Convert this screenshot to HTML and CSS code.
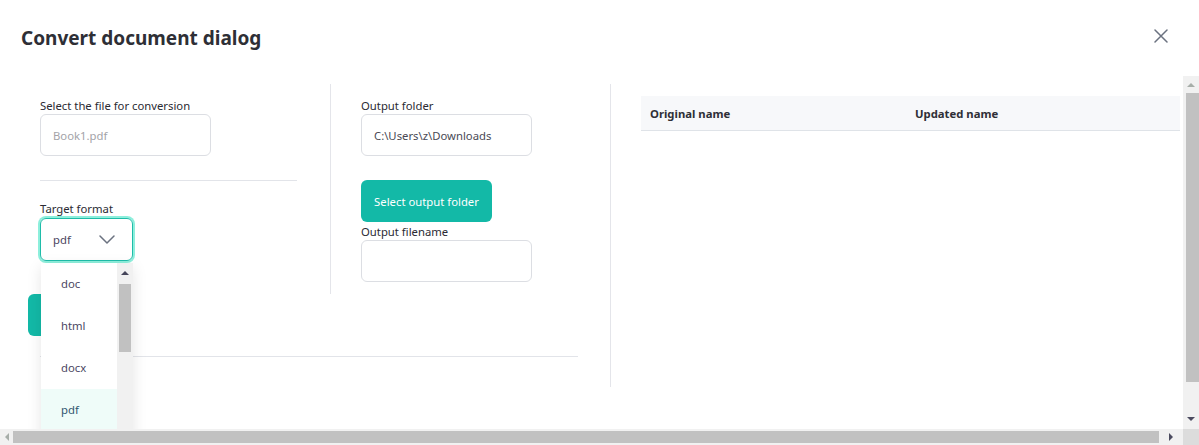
FILE: index.html
```html
<!DOCTYPE html>
<html lang="en">
<head>
<meta charset="utf-8">
<title>Convert document dialog</title>
<link rel="stylesheet" href="styles.css">
</head>
<body>
<div class="dialog">
  <header class="header">
    <h1 class="title">Convert document dialog</h1>
    <button class="close" aria-label="Close">
      <svg width="14" height="14" viewBox="0 0 14 14"><path d="M1 1 L13 13 M13 1 L1 13" stroke="#6b7280" stroke-width="1.5" fill="none" stroke-linecap="round"/></svg>
    </button>
  </header>
  <div class="frame">
    <div class="viewport">
      <div class="content">
        <section class="left">
          <div class="cols">
            <div class="col col1">
              <label class="label">Select the file for conversion</label>
              <div class="input disabled">Book1.pdf</div>
              <hr class="sep sep-mid">
              <label class="label">Target format</label>
              <div class="select-wrap">
                <div class="select focused">
                  <span>pdf</span>
                  <svg class="chev" width="16" height="9" viewBox="0 0 16 9"><path d="M1 1 L8 8 L15 1" stroke="#6b7280" stroke-width="1.5" fill="none" stroke-linecap="round" stroke-linejoin="round"/></svg>
                </div>
                <div class="dropdown">
                  <ul class="options">
                    <li class="opt">doc</li>
                    <li class="opt">html</li>
                    <li class="opt">docx</li>
                    <li class="opt selected">pdf</li>
                  </ul>
                  <div class="dbar">
                    <span class="sb-btn dbtn">
                      <svg width="8" height="4" viewBox="0 0 8 4"><path d="M0 4 L4 0 L8 4 Z" fill="#45455a"/></svg>
                    </span>
                    <span class="dthumb"></span>
                  </div>
                </div>
              </div>
            </div>
            <div class="col col2">
              <label class="label">Output folder</label>
              <div class="input">C:\Users\z\Downloads</div>
              <button class="btn btn-folder">Select output folder</button>
              <label class="label label-tight">Output filename</label>
              <div class="input"></div>
            </div>
          </div>
          <button class="btn btn-convert" aria-label="Convert"></button>
          <hr class="sep sep-bottom">
        </section>
        <section class="right">
          <div class="table">
            <div class="thead">
              <div class="th">Original name</div>
              <div class="th">Updated name</div>
            </div>
          </div>
        </section>
      </div>
    </div>
    <div class="vbar">
      <span class="sb-btn vbtn">
        <svg width="8" height="4" viewBox="0 0 8 4"><path d="M0 4 L4 0 L8 4 Z" fill="#a7aea9"/></svg>
      </span>
      <div class="vtrack"><span class="vthumb"></span></div>
      <span class="sb-btn vbtn">
        <svg width="8" height="4" viewBox="0 0 8 4"><path d="M0 0 L8 0 L4 4 Z" fill="#4c4c60"/></svg>
      </span>
    </div>
    <div class="hbar">
      <span class="sb-btn hbtn-l">
        <svg width="4" height="8" viewBox="0 0 4 8"><path d="M4 0 L4 8 L0 4 Z" fill="#a7aea9"/></svg>
      </span>
      <div class="htrack"><span class="hthumb"></span></div>
      <span class="sb-btn hbtn-r">
        <svg width="4" height="8" viewBox="0 0 4 8"><path d="M0 0 L4 4 L0 8 Z" fill="#4c4c60"/></svg>
      </span>
    </div>
    <div class="corner"></div>
  </div>
</div>
</body>
</html>
```
FILE: styles.css
```css
* { box-sizing: border-box; }
html, body { margin: 0; padding: 0; height: 100%; overflow: hidden; }
body {
  font-family: "Noto Sans", "Open Sans", sans-serif;
  font-size: 11.3px;
  color: #2b2b33;
  background: #fff;
}
.dialog { height: 100vh; display: flex; flex-direction: column; }
.header {
  flex: none;
  height: 76px;
  display: flex;
  justify-content: space-between;
  align-items: flex-start;
  padding: 24px 31px 0 21px;
}
.title {
  margin: 0;
  font-size: 19px;
  line-height: 28px;
  font-weight: 700;
  color: #2e2f36;
}
.close {
  border: 0;
  background: transparent;
  padding: 0;
  margin-top: 5px;
  width: 14px;
  height: 14px;
  display: block;
}
.close svg { display: block; }

/* scroll frame */
.frame {
  flex: 1;
  min-height: 0;
  display: grid;
  grid-template-columns: 1fr 16px;
  grid-template-rows: 1fr 16px;
}
.viewport { overflow: hidden; min-width: 0; min-height: 0; }
.sb-btn { display: flex; align-items: center; justify-content: center; flex: none; }
.sb-btn svg { display: block; }
.vbar { background: #f1f1f1; display: flex; flex-direction: column; }
.vbtn { height: 17px; }
.vbtn:last-child { height: 20px; }
.vtrack { flex: 1; padding: 0 0 0 3px; }
.vthumb { display: block; height: 289px; background: #c1c1c1; }
.hbar { background: #f1f1f1; display: flex; }
.hbtn-l { width: 13px; }
.hbtn-r { width: 24px; }
.htrack { flex: 1; padding: 2px 0; }
.hthumb { display: block; height: 100%; background: #c1c1c1; }
.corner { background: #dcdcdc; }

.content { display: flex; width: 1188px; padding-top: 8px; align-items: flex-start; }

.left {
  width: 611px;
  flex: none;
  padding: 0 32px 30px 40px;
  border-right: 1px solid #e4e5ea;
}
.cols { display: flex; }
.col { display: flex; flex-direction: column; align-items: flex-start; padding-top: 14px; }
.col1 { width: 291px; padding-right: 33px; padding-bottom: 33px; border-right: 1px solid #e4e5ea; }
.col2 { padding-left: 30px; }

.label { display: block; line-height: 16px; color: #2b2b33; white-space: nowrap; }
.label-tight { margin-top: 2px; }
.input {
  width: 171px;
  height: 42px;
  border: 1px solid #dcdee3;
  border-radius: 6px;
  padding: 0 12px;
  display: flex;
  align-items: center;
  color: #4a4a55;
  background: #fff;
}
.input.disabled { color: #a3a3a8; }
.sep { border: 0; border-top: 1px solid #e2e4e9; margin: 0; align-self: stretch; }
.sep-mid { margin: 24px 0 20px; width: 257px; }
.sep-bottom { margin-top: 20px; }

.select-wrap { position: relative; margin-top: 1px; }
.select {
  width: 93px;
  height: 43px;
  border: 1px solid #1fbca9;
  border-radius: 6px;
  box-shadow: 0 0 0 2px #8defdc;
  display: flex;
  align-items: center;
  justify-content: space-between;
  padding: 0 17px 0 12px;
  color: #4a4560;
}
.chev { display: block; }

.dropdown {
  position: absolute;
  top: 45px;
  left: 1px;
  width: 92px;
  height: 200px;
  display: flex;
  background: #fff;
  box-shadow: 0 4px 14px rgba(0,0,0,0.10);
  z-index: 5;
}
.options { flex: 1; margin: 0; padding: 0; list-style: none; overflow: hidden; }
.opt { height: 42px; line-height: 42px; padding-left: 20px; color: #4b4763; }
.opt.selected { background: #effcf9; color: #31566f; }
.dbar { width: 16px; flex: none; background: #f1f1f1; display: flex; flex-direction: column; align-items: center; }
.dbtn { height: 19px; width: 16px; }
.dthumb { display: block; width: 12px; height: 68px; margin-top: 2px; background: #c1c1c1; }

.btn {
  border: 0;
  border-radius: 6px;
  background: #13b9a7;
  color: #fff;
  font-family: inherit;
  font-size: 11.3px;
  height: 42px;
  padding: 0 13px;
}
.btn-folder { margin-top: 24px; width: 131px; padding: 0; }
.btn-convert { margin-left: -12px; display: block; width: 90px; }

.right { flex: 1; padding: 12px 8px 0 30px; }
.thead {
  display: grid;
  grid-template-columns: 265px 1fr;
  height: 35px;
  background: #f7f8fa;
  border-bottom: 1px solid #dfe3e8;
  align-items: center;
}
.th { padding-left: 9px; font-weight: 700; color: #2e2f36; }
```
